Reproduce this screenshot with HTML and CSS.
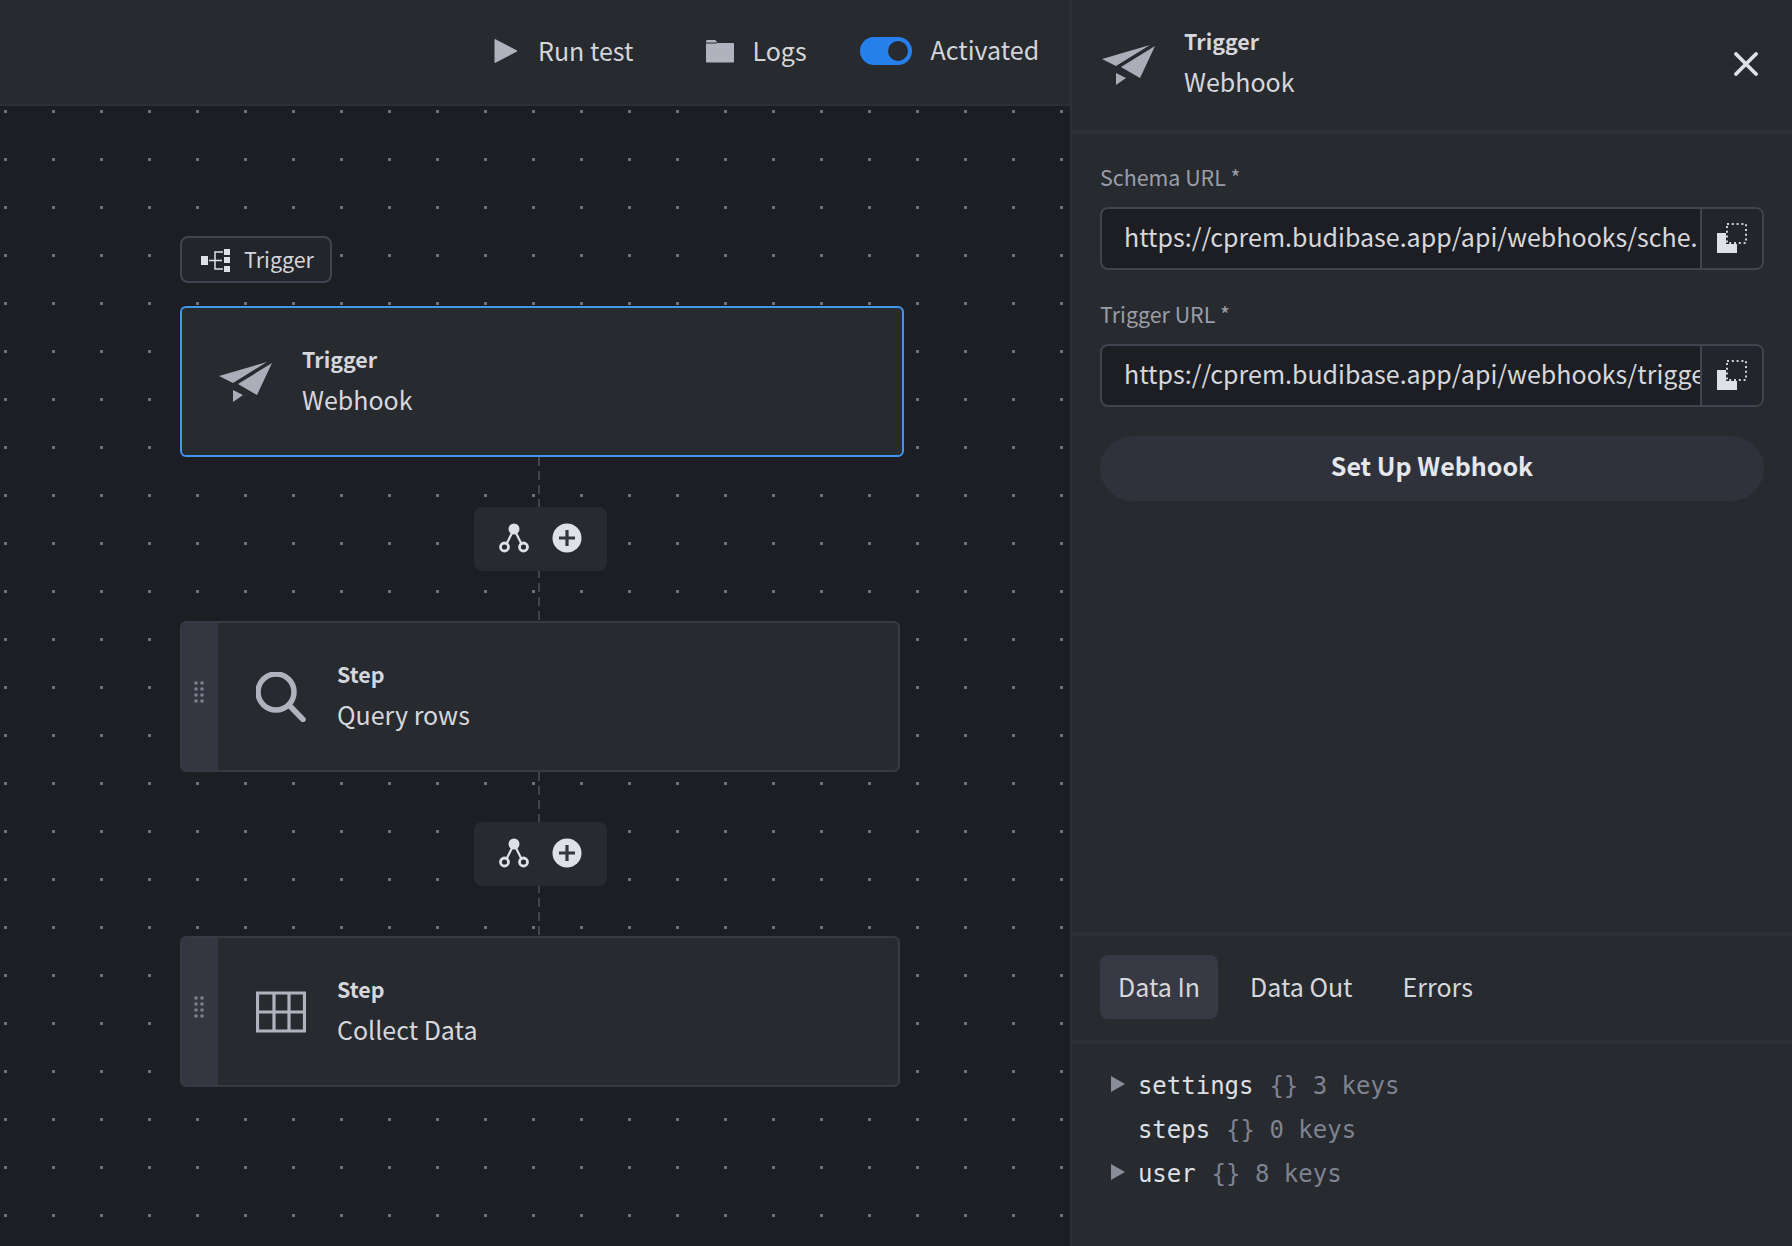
FILE: index.html
```html
<!DOCTYPE html>
<html lang="en">
<head>
<meta charset="utf-8">
<title>Automation</title>
<link rel="stylesheet" href="styles.css">
</head>
<body>
<div class="app">
  <main class="main">
    <header class="toolbar">
      <button class="tool tool-run">
        <svg class="ico-play" viewBox="0 0 24 26"><path d="M1 1.500 23 13 1 24.500z" fill="#b0b3bd" stroke="#b0b3bd" stroke-linejoin="round"/></svg>
        <span>Run test</span>
      </button>
      <button class="tool tool-logs">
        <svg class="ico-folder" viewBox="0 0 30 24"><path d="M1 4V2.500C1 1.600 1.600 1 2.500 1h7c.7 0 1.200.3 1.600.8L12.500 4H28c.6 0 1 .4 1 1v17.500c0 .6-.4 1-1 1H2c-.6 0-1-.4-1-1z" fill="#b0b3bd"/><path d="M1 4h11" stroke="#272a2f" stroke-width="1"/></svg>
        <span>Logs</span>
      </button>
      <div class="activate">
        <span class="toggle"><span class="knob"></span></span>
        <span>Activated</span>
      </div>
    </header>
    <section class="canvas">
      <div class="flow">
        <div class="flow-tag">
          <svg class="ico-tag" viewBox="0 0 30 24"><path d="M1 8h7v9H1zM24 1h6v6h-6zM24 9h6v6h-6zM24 18h6v6h-6z" fill="#e0e1e6"/><path d="M9 12.500h13M15 12.500V4h8M15 12.500V21h8" stroke="#e0e1e6" stroke-width="1.500" fill="none"/></svg>
          <span>Trigger</span>
        </div>
        <article class="card card-active">
          <div class="card-main card-main-trigger">
            <svg class="ico-plane" viewBox="0 0 54 42"><use href="#plane"/></svg>
            <div class="card-text"><b>Trigger</b><span>Webhook</span></div>
          </div>
        </article>
        <div class="link">
          <div class="actions">
            <svg class="ico-branch" viewBox="0 0 30 30"><use href="#branch"/></svg>
            <svg class="ico-plus" viewBox="0 0 30 30"><use href="#plus"/></svg>
          </div>
        </div>
        <article class="card">
          <div class="grip"><svg class="ico-grip" viewBox="0 0 10 22"><use href="#grip"/></svg></div>
          <div class="card-main">
            <svg class="ico-step" viewBox="0 0 50 50"><circle cx="20" cy="20" r="18" fill="none" stroke="#b0b3bd" stroke-width="5.500"/><path d="M33 33 47 47.500" stroke="#b0b3bd" stroke-width="5.500" stroke-linecap="round"/></svg>
            <div class="card-text"><b>Step</b><span>Query rows</span></div>
          </div>
        </article>
        <div class="link">
          <div class="actions">
            <svg class="ico-branch" viewBox="0 0 30 30"><use href="#branch"/></svg>
            <svg class="ico-plus" viewBox="0 0 30 30"><use href="#plus"/></svg>
          </div>
        </div>
        <article class="card">
          <div class="grip"><svg class="ico-grip" viewBox="0 0 10 22"><use href="#grip"/></svg></div>
          <div class="card-main">
            <svg class="ico-step" viewBox="0 0 50 50"><path d="M1.500 6h47v38h-47zM18 6v38M33 6v38M1.500 25h47" fill="none" stroke="#b0b3bd" stroke-width="3.200"/></svg>
            <div class="card-text"><b>Step</b><span>Collect Data</span></div>
          </div>
        </article>
      </div>
    </section>
  </main>
  <aside class="panel">
    <header class="panel-head">
      <svg class="ico-plane" viewBox="0 0 54 42"><use href="#plane"/></svg>
      <div class="card-text"><b>Trigger</b><span>Webhook</span></div>
      <svg class="ico-close" viewBox="0 0 24 24"><path d="M2 2 22 22M22 2 2 22" stroke="#e0e1e6" stroke-width="3.800" stroke-linecap="round"/></svg>
    </header>
    <div class="form">
      <label class="field-label">Schema URL *</label>
      <div class="copy-input">
        <div class="copy-value">https://cprem.budibase.app/api/webhooks/sche.</div>
        <div class="copy-btn"><svg class="ico-copy" viewBox="0 0 30 30"><use href="#copy"/></svg></div>
      </div>
      <label class="field-label field-gap">Trigger URL *</label>
      <div class="copy-input">
        <div class="copy-value">https://cprem.budibase.app/api/webhooks/trigger</div>
        <div class="copy-btn"><svg class="ico-copy" viewBox="0 0 30 30"><use href="#copy"/></svg></div>
      </div>
      <button class="setup">Set Up Webhook</button>
    </div>
    <div class="tabs">
      <span class="tab tab-on">Data In</span>
      <span class="tab">Data Out</span>
      <span class="tab">Errors</span>
    </div>
    <div class="tree">
      <div class="row"><i class="arrow"></i><span class="key">settings</span><span class="meta">{} 3 keys</span></div>
      <div class="row"><i class="noarrow"></i><span class="key">steps</span><span class="meta">{} 0 keys</span></div>
      <div class="row"><i class="arrow"></i><span class="key">user</span><span class="meta">{} 8 keys</span></div>
    </div>
  </aside>
</div>
<svg class="defs" aria-hidden="true">
  <symbol id="plane" viewBox="0 0 54 42"><path d="M0 15 48 1 14 22zM53 2 19 23 38 34zM14 29l10 5-10 7z" fill="#abaeb9"/></symbol>
  <symbol id="branch" viewBox="0 0 30 30"><circle cx="15" cy="6" r="5.500" fill="#e0e1e6"/><path d="M13 10 7.500 21M17 10l5.500 11" stroke="#e0e1e6" stroke-width="2.200"/><circle cx="5.500" cy="24" r="4" fill="none" stroke="#e0e1e6" stroke-width="2.800"/><circle cx="24.500" cy="24" r="4" fill="none" stroke="#e0e1e6" stroke-width="2.800"/></symbol>
  <symbol id="plus" viewBox="0 0 30 30"><circle cx="15" cy="15" r="14.500" fill="#e0e1e6"/><path d="M15 7v16M7 15h16" stroke="#33363d" stroke-width="3.200"/></symbol>
  <symbol id="grip" viewBox="0 0 10 22"><g fill="#7d818d"><circle cx="2" cy="2" r="1.800"/><circle cx="8" cy="2" r="1.800"/><circle cx="2" cy="8" r="1.800"/><circle cx="8" cy="8" r="1.800"/><circle cx="2" cy="14" r="1.800"/><circle cx="8" cy="14" r="1.800"/><circle cx="2" cy="20" r="1.800"/><circle cx="8" cy="20" r="1.800"/></g></symbol>
  <symbol id="copy" viewBox="0 0 30 30"><path d="M0 10h9v11h11v9H0z" fill="#e0e1e6"/><rect x="10" y="1" width="19" height="19" fill="none" stroke="#d0d1d6" stroke-width="2" stroke-dasharray="2 2.800"/></symbol>
</svg>
</body>
</html>
```
FILE: styles.css
```css
* { box-sizing: border-box; }
html, body { margin: 0; height: 100%; }
body {
  background: #1c1e23;
  color: #e0e1e6;
  font-family: "Noto Sans CJK SC", "Noto Sans", sans-serif;
  overflow: hidden;
}
button { font: inherit; color: inherit; background: none; border: 0; padding: 0; }
.defs { display: none; }
.app { display: flex; height: 1246px; }
.main { width: 1070px; display: flex; flex-direction: column; flex: none; }

.toolbar {
  height: 106px;
  flex: none;
  background: #272a2f;
  border-bottom: 2px solid #2e3036;
  display: flex;
  align-items: center;
  padding-left: 494px;
  font-size: 25px;
  color: #d4d5da;
}
.tool { display: flex; align-items: center; font-size: 25px; margin-top: -4px; }
.ico-play, .ico-folder { margin-top: 1px; }
.tool-run { gap: 20px; margin-right: 72px; }
.tool-logs { gap: 17px; margin-right: 53px; }
.ico-play { width: 24px; height: 26px; }
.ico-folder { width: 30px; height: 24px; }
.activate { display: flex; align-items: center; gap: 19px; margin-top: -6px; }
.toggle {
  width: 52px; height: 28px; border-radius: 14px; background: #2680eb; margin-top: 4px;
  display: flex; align-items: center; justify-content: flex-end; padding-right: 4px;
}
.knob { width: 20px; height: 20px; border-radius: 50%; background: #272a2f; }

.canvas {
  flex: 1;
  background-color: #1c1e23;
  padding: 130px 0 0 180px;
  background-image: radial-gradient(circle at 1.500px 1.500px, #717379 1.700px, transparent 1.800px);
  background-size: 48px 48px;
  background-repeat: repeat;
  background-position: 4px -44px;
}
.flow { width: 724px; display: flex; flex-direction: column; }
.flow-tag {
  width: 152px; height: 47px; margin-bottom: 23px;
  display: flex; align-items: center; gap: 14px; padding-left: 18px;
  border: 2px solid #41444e; border-radius: 8px; background: #22252c;
  font-size: 21.400px; color: #d4d5da;
}
.flow-tag span { margin-top: -2px; }
.ico-tag { width: 30px; height: 24px; }
.card {
  width: 720px; height: 151px; display: flex;
  background: #272a2f; border: 2px solid #373a42; border-radius: 6px; overflow: hidden;
}
.card-active { width: 724px; border-color: #4296ec; }
.grip { width: 36px; flex: none; background: #343741; display: flex; justify-content: center; padding-top: 58px; padding-right: 2px; }
.ico-grip { width: 10px; height: 22px; }
.card-main { display: flex; align-items: center; gap: 31px; padding-left: 38px; flex: 1; }
.card-main-trigger { gap: 29px; padding-left: 37px; }
.ico-plane { width: 54px; height: 42px; flex: none; }
.ico-step { width: 50px; height: 50px; flex: none; }
.card-text { display: flex; flex-direction: column; padding-top: 4px; }
.card-text b { font-size: 21.400px; line-height: 30px; font-weight: 700; color: #d6d7dc; margin-top: -4px; }
.card-text span { font-size: 25px; line-height: 40px; color: #d6d7dc; margin-top: 5px; }

.link {
  width: 720px; padding: 50px 0; display: flex; justify-content: center;
  background: repeating-linear-gradient(#41444e 0 9px, transparent 9px 14px) 358px 0 / 2px 100% no-repeat;
}
.actions {
  width: 133px; height: 64px; background: #272a2f; border-radius: 8px;
  display: flex; align-items: center; gap: 23px; padding: 0 0 2px 25px;
}
.ico-branch, .ico-plus { width: 30px; height: 30px; flex: none; }

.panel {
  flex: 1; min-width: 0; background: #272a2f; border-left: 2px solid #2e3036;
  display: flex; flex-direction: column;
}
.panel-head {
  height: 134px; flex: none; border-bottom: 4px solid #2e3036;
  display: flex; align-items: center; padding: 0 34px 0 30px; gap: 28px;
}
.panel-head .card-text { flex: 1; margin-top: -3px; }
.ico-close { width: 24px; height: 24px; flex: none; margin-top: -2px; }
.form { flex: 1; min-height: 0; padding: 28px 28px 0 28px; display: flex; flex-direction: column; }
.field-label { font-size: 21.400px; line-height: 30px; color: #9b9ea8; height: 45px; }
.field-gap { margin-top: 29px; height: 45px; }
.copy-input {
  height: 63px; flex: none; display: flex; border: 2px solid #41444e; border-radius: 8px; overflow: hidden; background: #1c1e23;
}
.copy-value {
  flex: 1; min-width: 0; padding-left: 22px; font-size: 25px; line-height: 55px; color: #d6d7dc;
  white-space: nowrap; overflow: hidden;
}
.copy-btn {
  width: 62px; flex: none; background: #22252c; border-left: 2px solid #41444e;
  display: flex; align-items: center; justify-content: center; padding-bottom: 2px;
}
.ico-copy { width: 30px; height: 30px; }
.setup {
  height: 65px; margin-top: 29px; border-radius: 33px; background: #2f323a;
  font-size: 25px; font-weight: 700; color: #e6e7eb; flex: none; padding-bottom: 8px;
}
.tabs {
  height: 112px; flex: none; border-top: 4px solid #2e3036; border-bottom: 4px solid #2e3036;
  display: flex; align-items: center; gap: 14px; padding: 0 28px 2px;
}
.tab { height: 64px; padding: 0 18px; border-radius: 8px; font-size: 25px; line-height: 62px; color: #d6d7dc; }
.tab-on { background: #373a44; }
.tree { height: 202px; flex: none; padding: 20px 0 0 39px; font-family: "DejaVu Sans Mono", monospace; font-size: 24px; }
.row { display: flex; align-items: center; height: 44px; gap: 14.400px; }
.arrow, .noarrow { width: 14px; height: 16px; flex: none; margin: -4px -1.500px 0 0; }
.arrow { background: #8a8e9b; clip-path: polygon(0 0, 100% 50%, 0 100%); }
.key { color: #dfe0e5; margin-right: 1.500px; }
.meta { color: #7f8391; }
```
